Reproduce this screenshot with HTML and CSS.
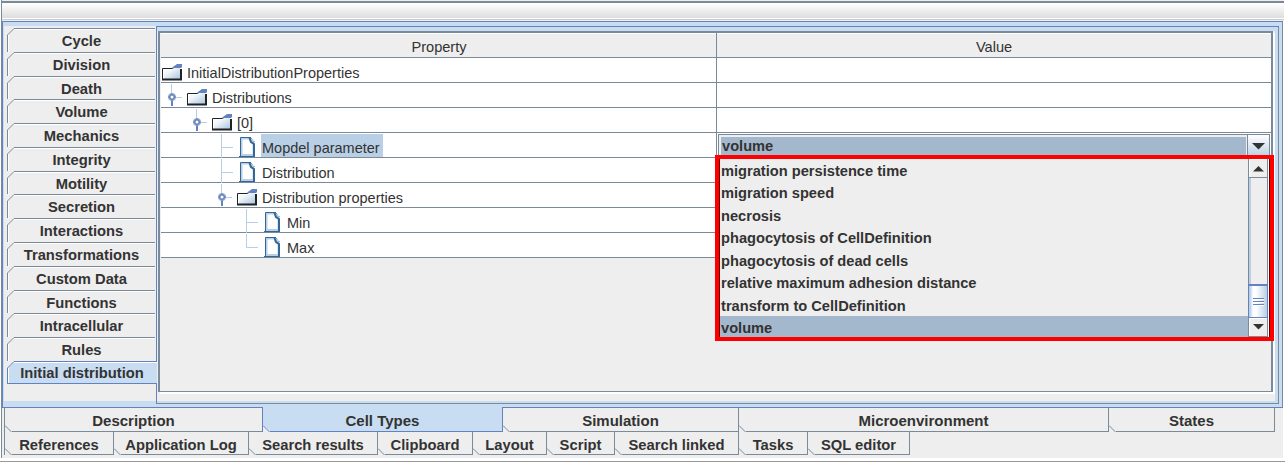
FILE: index.html
```html
<!DOCTYPE html>
<html lang="en">
<head>
<meta charset="utf-8">
<title>Cell Types</title>
<link rel="stylesheet" href="styles.css">
</head>
<body>
<svg class="defs" width="0" height="0">
  <defs>
    <linearGradient id="paper" x1="0" y1="0" x2="1" y2="1"><stop offset="0" stop-color="#fff"/><stop offset=".35" stop-color="#f0f5fa"/><stop offset="1" stop-color="#a9c6e0"/></linearGradient>
    <symbol id="folder" viewBox="0 0 20 17">
      <path d="M1 5H11L13 4H18V15H1Z" fill="url(#paper)"/>
      <path d="M0.5 15V4.5H10.5L12.5 3" fill="none" stroke="#222"/>
      <path d="M10 3.5L13 1.5L15 0H20V3.5H19V4H11Z" fill="#6382bf"/>
      <path d="M1.5 15V5.5H11" fill="none" stroke="#fff"/>
      <path d="M0 15.5H19M19 5V16.5" fill="none" stroke="#222" stroke-width="2"/>
    </symbol>
    <symbol id="leaf" viewBox="0 0 17 20">
      <path d="M2.5 1.5H10.5L14.5 6V18H2.5Z" fill="#fff" stroke="#b8cfe5" stroke-width="2"/>
      <path d="M1.5 19V0.5H12M0 19.5H16" fill="none" stroke="#336699"/>
      <path d="M10.5 1L12 5L15 7V19" fill="none" stroke="#336699" stroke-width="2"/>
      <path d="M12 1L15.5 5" stroke="#336699" stroke-dasharray="1 1"/>
    </symbol>
    <symbol id="handle" viewBox="0 0 16 25">
      <path d="M4.5 1V10M8 14.5H15" stroke="#b8cfe5" fill="none"/>
      <path d="M5 17V23" stroke="#6382bf" stroke-width="2"/>
      <circle cx="5" cy="14" r="4" fill="#a3b8cc"/>
      <path d="M5 10L9 14L5 18L1 14Z" fill="#6382bf"/>
      <circle cx="5" cy="14" r="1.5" fill="#fff"/>
    </symbol>
    <symbol id="branch" viewBox="0 0 12 25"><path d="M.5 1V25M1 14.5H12" stroke="#b8cfe5"/></symbol>
    <symbol id="corner" viewBox="0 0 12 25"><path d="M.5 1V14.5H12" fill="none" stroke="#b8cfe5"/></symbol>
    <symbol id="cut-top" viewBox="0 0 7 7"><path d="M0 0H7V1L1 7H0Z" fill="#eee"/><path d="M.5 7L7 .5" stroke="currentColor"/></symbol>
    <symbol id="cut-bottom" viewBox="0 0 7 7"><path d="M0 0L7 6V7H0Z" fill="#eee"/><path d="M0 .5L6.5 7" stroke="currentColor"/></symbol>
  </defs>
</svg>
<div class="toolbar"></div>
<div class="pane">
  <nav class="side">
    <div class="stab"><svg><use href="#cut-top"/></svg>Cycle</div>
    <div class="stab"><svg><use href="#cut-top"/></svg>Division</div>
    <div class="stab"><svg><use href="#cut-top"/></svg>Death</div>
    <div class="stab"><svg><use href="#cut-top"/></svg>Volume</div>
    <div class="stab"><svg><use href="#cut-top"/></svg>Mechanics</div>
    <div class="stab"><svg><use href="#cut-top"/></svg>Integrity</div>
    <div class="stab"><svg><use href="#cut-top"/></svg>Motility</div>
    <div class="stab"><svg><use href="#cut-top"/></svg>Secretion</div>
    <div class="stab"><svg><use href="#cut-top"/></svg>Interactions</div>
    <div class="stab"><svg><use href="#cut-top"/></svg>Transformations</div>
    <div class="stab"><svg><use href="#cut-top"/></svg>Custom Data</div>
    <div class="stab"><svg><use href="#cut-top"/></svg>Functions</div>
    <div class="stab"><svg><use href="#cut-top"/></svg>Intracellular</div>
    <div class="stab"><svg><use href="#cut-top"/></svg>Rules</div>
    <div class="stab on"><svg><use href="#cut-top"/></svg>Initial distribution</div>
  </nav>
  <main class="content">
    <div class="scroll">
      <div class="row head"><div class="cell">Property</div><div class="cell">Value</div></div>
      <div class="row"><div class="cell"><svg class="folder"><use href="#folder"/></svg><span>InitialDistributionProperties</span></div><div class="cell"></div></div>
      <div class="row"><div class="cell d1"><svg class="handle"><use href="#handle"/></svg><svg class="folder"><use href="#folder"/></svg><span>Distributions</span></div><div class="cell"></div></div>
      <div class="row"><div class="cell d2"><svg class="handle"><use href="#handle"/></svg><svg class="folder"><use href="#folder"/></svg><span>[0]</span></div><div class="cell"></div></div>
      <div class="row"><div class="cell d3"><svg class="line"><use href="#branch"/></svg><svg class="leaf"><use href="#leaf"/></svg><span class="picked">Mopdel parameter</span></div>
        <div class="cell editor"><div class="combo"><div class="chosen">volume</div><div class="drop"><svg width="13" height="7"><path d="M0 0H13L6.5 6.5Z" fill="#333"/></svg></div></div>
          <div class="popup">
            <div class="list">
              <div>migration persistence time</div><div>migration speed</div><div>necrosis</div><div>phagocytosis of CellDefinition</div><div>phagocytosis of dead cells</div><div>relative maximum adhesion distance</div><div>transform to CellDefinition</div><div class="sel">volume</div>
            </div>
            <div class="bar">
              <div class="btn up"><svg width="11" height="6"><path d="M0 5.5L5.5 0L11 5.5Z" fill="#333"/></svg></div>
              <div class="track"></div>
              <div class="thumb"><i></i><i></i><i></i></div>
              <div class="btn down"><svg width="11" height="6"><path d="M0 0H11L5.5 5.5Z" fill="#333"/></svg></div>
            </div>
          </div>
        </div></div>
      <div class="row"><div class="cell d3"><svg class="line"><use href="#branch"/></svg><svg class="leaf"><use href="#leaf"/></svg><span>Distribution</span></div><div class="cell"></div></div>
      <div class="row"><div class="cell d3"><svg class="handle"><use href="#handle"/></svg><svg class="folder"><use href="#folder"/></svg><span>Distribution properties</span></div><div class="cell"></div></div>
      <div class="row"><div class="cell d4"><svg class="line"><use href="#branch"/></svg><svg class="leaf"><use href="#leaf"/></svg><span>Min</span></div><div class="cell"></div></div>
      <div class="row"><div class="cell d4"><svg class="line"><use href="#corner"/></svg><svg class="leaf"><use href="#leaf"/></svg><span>Max</span></div><div class="cell"></div></div>
    </div>
  </main>
</div>
<footer class="tabs">
  <div class="strip main">
    <div class="tab"><svg><use href="#cut-bottom"/></svg>Description</div>
    <div class="tab on"><svg><use href="#cut-bottom"/></svg>Cell Types</div>
    <div class="tab"><svg><use href="#cut-bottom"/></svg>Simulation</div>
    <div class="tab"><svg><use href="#cut-bottom"/></svg>Microenvironment</div>
    <div class="tab"><svg><use href="#cut-bottom"/></svg>States</div>
  </div>
  <div class="strip views">
    <div class="tab"><svg><use href="#cut-bottom"/></svg>References</div>
    <div class="tab"><svg><use href="#cut-bottom"/></svg>Application Log</div>
    <div class="tab"><svg><use href="#cut-bottom"/></svg>Search results</div>
    <div class="tab"><svg><use href="#cut-bottom"/></svg>Clipboard</div>
    <div class="tab"><svg><use href="#cut-bottom"/></svg>Layout</div>
    <div class="tab"><svg><use href="#cut-bottom"/></svg>Script</div>
    <div class="tab"><svg><use href="#cut-bottom"/></svg>Search linked</div>
    <div class="tab"><svg><use href="#cut-bottom"/></svg>Tasks</div>
    <div class="tab"><svg><use href="#cut-bottom"/></svg>SQL editor</div>
  </div>
</footer>
<div class="base"></div>
</body>
</html>
```
FILE: styles.css
```css
* { box-sizing: border-box; }
body { margin: 0; width: 1285px; height: 462px; overflow: hidden; background: #fff; color: #333; font: 15px/18px "Liberation Sans", Arial, sans-serif; display: flex; flex-direction: column; }
svg { display: block; flex: none; }
.defs { position: absolute; }
.toolbar { flex: none; height: 21px; width: 1283px; margin-left: 1px; border-left: 1px solid #7a8a99; background: linear-gradient(#eee 0 1px, #7a8a99 1px 3px, #fff 3px, #ddd 18px, #fff 18px 19px, #ccc 19px 20px, #eee 20px); }
.pane { flex: none; display: flex; width: 1281px; height: 387px; margin-left: 2px; padding: 4px 3px 3px 0; background: #c8ddf2; border: 1px solid #6382bf; border-right-color: #7a8a99; box-shadow: -1px 0 #7a8a99; }
.side { width: 153px; height: 375px; flex: none; background: #eee; padding: 2px 0 0 4px; display: grid; grid-template-rows: repeat(14, 23.79px) 23px; font-weight: bold; font-size: 14.75px; box-shadow: inset 1px 0 #c8ddf2; }
.stab { position: relative; width: 148px; border-top: 1px solid #7a8a99; border-left: 1px solid #7a8a99; box-shadow: inset 1px 1px #fff; text-align: center; line-height: 24px; color: #333; }
.stab svg, .tab svg { position: absolute; width: 7px; height: 7px; left: -1px; top: -1px; color: #7a8a99; }
.stab.on { width: 150px; background: #c8ddf2; border-color: #6382bf; border-bottom: 1px solid #6382bf; line-height: 22px; padding-right: 1px; z-index: 1; }
.stab.on svg { color: #6382bf; }
.content { flex: 1; height: 378px; border: 1px solid #6382bf; border-right-color: #7a8a99; border-bottom-color: #7a8a99; background: #eee; padding: 4px 3px 9px 1px; box-shadow: inset 0 4px #c8ddf2, inset -3px 0 #c8ddf2, inset 0 -2px #c8ddf2; }
.scroll { height: 361px; width: 1115px; border: 2px solid #7a8a99; border-bottom-width: 1px; background: #eee; box-shadow: 2px 2px #fff; padding-left: 1px; }
.row { display: grid; grid-template-columns: 556px 1fr; height: 25px; background: #fff; border-bottom: 1px solid #7a8a99; }
.head { background: #eee; box-shadow: inset 0 1px #fff; }
.row .cell { display: flex; height: 24px; align-items: flex-start; position: relative; }
.row .cell:first-child { border-right: 1px solid #7a8a99; height: 25px; padding-left: 1px; }
.head .cell { justify-content: center; padding-top: 5px; font-size: 14.6px; }
.folder { width: 20px; height: 17px; margin-top: 6px; }
.folder + span { margin-left: 4px; }
.cell span { height: 23px; margin-top: 1px; padding: 3px 3px 0 1px; line-height: 22px; font-size: 14.5px; }
.cell .picked { background: #b8cfe5; }
.handle { width: 16px; height: 25px; }
.handle + .folder { margin-left: 4px; }
.row .d1:first-child { padding-left: 6px; }
.row .d2:first-child { padding-left: 31px; }
.row .d3:first-child { padding-left: 56px; }
.row .d4:first-child { padding-left: 85px; }
.row .d3 .line { margin-left: 4px; }
.line { width: 12px; height: 25px; }
.leaf { width: 17px; height: 20px; margin: 4px 0 0 6px; }
.leaf + span { margin-left: 5px; }
.editor { padding: 1px 1px 0; }
.combo { display: flex; width: 552px; height: 24px; border: 1px solid #7a8a99; background: #eee; padding: 1px 0 0 1px; }
.chosen { width: 525px; height: 21px; margin: 1px 1px 0; padding-left: 1px; background: #a3b8cc; font-weight: bold; line-height: 19px; font-size: 14.65px; }
.drop { flex: 1; border-left: 1px solid #7a8a99; background: linear-gradient(#fff, #b8cfe5); display: flex; justify-content: center; padding-top: 8px; margin-top: -1px; }
.popup { position: absolute; left: -2px; top: 22px; width: 559px; height: 186px; border: 4px solid #f00; background: #eee; z-index: 3; display: flex; box-shadow: inset -1px 0 #600, inset -3px 0 #fff, inset 1px 0 #600; }
.list { width: 529px; padding: 0 0 0 1px; display: grid; grid-template-rows: repeat(7, 22.45px) 21px; font-weight: bold; font-size: 14.65px; line-height: 25px; }
.list div { height: 21px; padding-left: 1px; white-space: nowrap; }
.list .sel { background: #a3b8cc; line-height: 24px; }
.bar { width: 20px; height: 178px; border-left: 1px solid #7a8a99; border-right: 1px solid #7a8a99; background: #eee; display: flex; flex-direction: column; }
.btn { display: flex; justify-content: center; background: #eee; border-bottom: 1px solid #7a8a99; box-shadow: inset 1px 1px #fff; }
.up { height: 19px; padding-top: 7px; }
.track { height: 106px; border-left: 2px solid #b8cfe5; }
.thumb { height: 34px; margin: 0 -1px; border: 1px solid #6382bf; border-top-width: 2px; background: linear-gradient(90deg, #b8cfe5 0 1px, #fff 4px, #fff 7px, #b8cfe5); display: flex; flex-direction: column; gap: 1px; padding: 12px 3px 0 4px; }
.thumb i { height: 2px; border-top: 1px solid #6382bf; background: #fff; }
.down { height: 19px; padding-top: 6px; }
.tabs { flex: none; height: 50px; margin: 0 2px 0 1px; border-left: 1px solid #7a8a99; background: #eee; font-weight: bold; padding-left: 2px; }
.strip { display: grid; border-left: 1px solid #7a8a99; }
.main { width: 1271px; height: 24px; grid-template-columns: 258px 240px 236px 370px 166px; }
.views { width: 906px; height: 23px; grid-template-columns: 109px 135px 129px 95px 74px 68px 124px 69px 102px; }
.tab { position: relative; height: 24px; text-align: center; line-height: 26px; border-right: 1px solid #7a8a99; border-bottom: 1px solid #7a8a99; }
.views .tab { height: 23px; line-height: 26px; font-size: 14.75px; }
.tab svg { left: 0; top: auto; bottom: -1px; }
.tab.on { height: 25px; background: #c8ddf2; border-color: #6382bf; box-shadow: -1px 0 #6382bf; margin-top: -1px; padding-top: 1px; }
.tab.on svg { color: #6382bf; }
.base { height: 4px; background: linear-gradient(#fff 0 3px, #999 3px); }
```
